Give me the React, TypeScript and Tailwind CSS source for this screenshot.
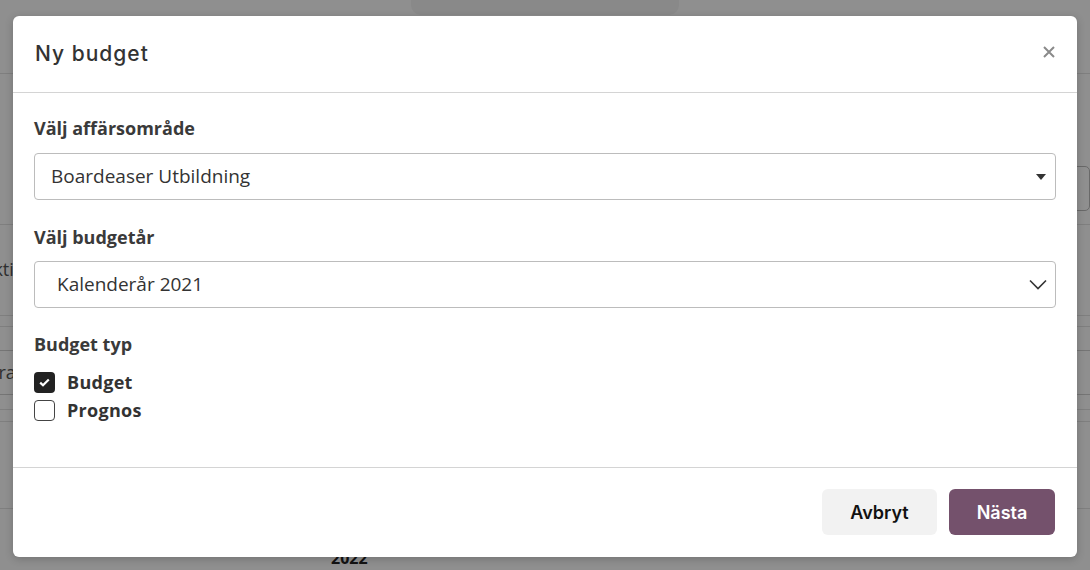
export default function App() {
  return (
    <div className="relative h-[570px] w-[1090px] overflow-hidden bg-white font-['Open_Sans',sans-serif]">
      {/* page behind the modal */}
      <div className="flex h-full flex-col">
        <div className="mx-auto h-[15px] w-[268px] rounded-b-[10px] bg-[#f4f4f4]" />
        <div className="h-[60px] border-b border-[#e2e2e2]" />
        <div className="flex h-[151px] justify-end border-b border-[#e2e2e2] pt-[92px]">
          <div className="h-[45px] w-[40px] rounded-[5px] border border-[#bbb]" />
        </div>
        <div className="flex h-[92px] items-center border-b border-[#e2e2e2] text-[18px] text-[#555]">
          <span className="-ml-[18px]">Aktiv</span>
        </div>
        <div className="h-[11px] border-b border-[#e2e2e2]" />
        <div className="flex h-[24px] border-b border-[#d0d0d0]" />
        <div className="flex h-[45px] items-center border-b border-[#d0d0d0] text-[18px] text-[#555]">
          <span className="-ml-[50px]">Jämföra</span>
        </div>
        <div className="h-[15px] border-b border-[#e2e2e2]" />
        <div className="h-[12px] border-b border-[#e2e2e2]" />
        <div className="h-[88px] border-b border-[#e2e2e2]" />
        <div className="pl-[331px] pt-[37px] text-[16px] font-bold text-[#222]">2022</div>
      </div>

      {/* overlay + modal */}
      <div className="absolute inset-0 bg-[rgba(0,0,0,0.44)] px-[13px] pt-[16px]">
        <div className="flex flex-col rounded-[6px] bg-white shadow-[0_2px_8px_rgba(0,0,0,0.2)]">
          <div className="flex h-[77px] items-center justify-between border-b border-[#d4d4d4] pl-[22px] pr-[21px]">
            <h2 className="font-['Inter',sans-serif] text-[21px] font-medium tracking-[1px] text-[#333]">
              Ny budget
            </h2>
            <svg width="14" height="14" viewBox="0 0 14 14" className="mt-[-4px]">
              <path d="M2 2L12 12M12 2L2 12" stroke="#8a8a8a" strokeWidth="2" />
            </svg>
          </div>

          <div className="flex flex-col px-[21px] pb-[43px] pt-[23px]">
            <label className="h-[24px] text-[18px] font-bold leading-[24px] text-[#3a3a3a]">
              Välj affärsområde
            </label>
            <div className="mt-[13px] flex h-[47px] items-center justify-between rounded-[4px] border border-[#bcbcbc] pl-[16px] pr-[9px]">
              <span className="text-[19px] text-[#333]">Boardeaser Utbildning</span>
              <svg width="10" height="6" viewBox="0 0 10 6">
                <path d="M0 0H10L5 6Z" fill="#333" />
              </svg>
            </div>

            <label className="mt-[25px] h-[24px] text-[18px] font-bold leading-[24px] text-[#3a3a3a]">
              Välj budgetår
            </label>
            <div className="mt-[12px] flex h-[47px] items-center justify-between rounded-[4px] border border-[#bcbcbc] pl-[22px] pr-[8px]">
              <span className="text-[19px] text-[#333]">Kalenderår 2021</span>
              <svg width="18" height="11" viewBox="0 0 18 11">
                <path d="M1 1.5L9 9.5L17 1.5" fill="none" stroke="#333" strokeWidth="1.6" />
              </svg>
            </div>

            <label className="mt-[24px] h-[24px] text-[18px] font-bold leading-[24px] text-[#3a3a3a]">
              Budget typ
            </label>
            <div className="mt-[12px] flex flex-col">
              <div className="flex h-[28px] items-center gap-[12px]">
                <span className="flex h-[21px] w-[21px] items-center justify-center rounded-[4px] bg-[#222]">
                  <svg width="11" height="9" viewBox="0 0 11 9">
                    <path d="M1.2 4.6L4 7.3L9.8 1.5" fill="none" stroke="#fff" strokeWidth="2.2" />
                  </svg>
                </span>
                <span className="text-[18px] font-bold tracking-[0.3px] text-[#333]">Budget</span>
              </div>
              <div className="flex h-[28px] items-center gap-[12px]">
                <span className="h-[21px] w-[21px] rounded-[4px] border border-[#444] bg-white" />
                <span className="text-[18px] font-bold tracking-[0.3px] text-[#333]">Prognos</span>
              </div>
            </div>
          </div>

          <div className="flex justify-end gap-[12px] border-t border-[#d4d4d4] pb-[22px] pl-[22px] pr-[22px] pt-[21px] font-['Inter',sans-serif]">
            <button className="h-[46px] w-[115px] rounded-[6px] bg-[#f2f2f2] text-[18px] font-semibold text-[#111]">
              Avbryt
            </button>
            <button className="h-[46px] w-[106px] rounded-[6px] bg-[#74516c] text-[18px] font-semibold text-white">
              Nästa
            </button>
          </div>
        </div>
      </div>
    </div>
  );
}
